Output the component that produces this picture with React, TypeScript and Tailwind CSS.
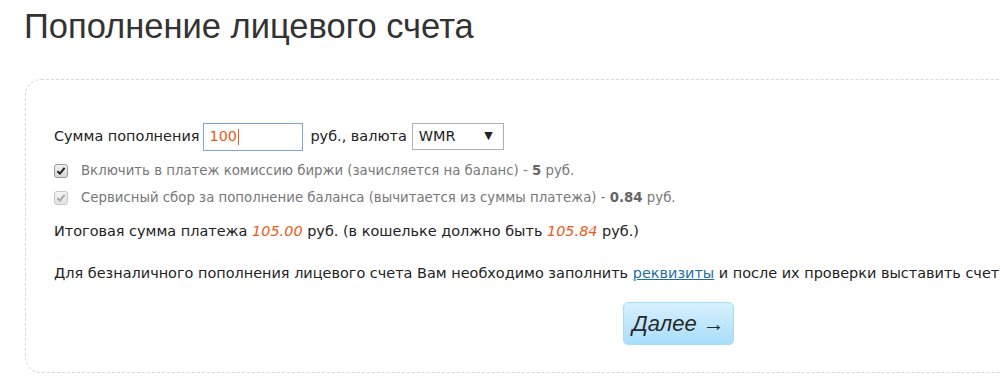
import React from 'react'

const bodyFont = { fontFamily: '"DejaVu Sans", Verdana, sans-serif' }
const titleFont = { fontFamily: '"Liberation Sans", Arial, sans-serif' }

function Check({ disabled }: { disabled?: boolean }) {
  return (
    <span
      className={
        'inline-flex h-[14px] w-[14px] shrink-0 items-center justify-center rounded-[3px] border bg-gradient-to-b ' +
        (disabled
          ? 'border-[#c8c8c8] from-[#f4f4f4] to-[#e2e2e2]'
          : 'border-[#9a9a9a] from-[#f2f2f2] to-[#d6d6d6]')
      }
    >
      <svg width="10" height="10" viewBox="0 0 10 10">
        <path
          d="M1.5 5.2 L3.9 7.6 L8.6 1.8"
          fill="none"
          stroke={disabled ? '#a8a8a8' : '#1e1e1e'}
          strokeWidth="2"
        />
      </svg>
    </span>
  )
}

export default function App() {
  return (
    <div className="h-[378px] w-[1000px] overflow-hidden bg-white text-[#222]" style={bodyFont}>
      <h1
        className="pl-[24px] pt-[4px] text-[34.5px] font-normal leading-[44px] text-[#333]"
        style={titleFont}
      >
        Пополнение лицевого счета
      </h1>
      <div className="ml-[25px] mt-[31px] h-[294px] w-[1200px] rounded-[16px] border border-dashed border-[#d8d8d8] pl-[28px] pt-[42px] text-[14.45px]">
        <div className="flex h-[29px] items-center">
          <span>Сумма пополнения</span>
          <div className="ml-[4px] flex h-[28px] w-[100px] items-center border border-[#7aa6d6] pl-[5px] text-[#f05a1a]">
            100<span className="ml-[1px] h-[16px] w-px bg-[#f05a1a]" />
          </div>
          <span className="ml-[7px]">руб., валюта</span>
          <div className="ml-[5px] flex h-[27px] w-[92px] items-center justify-between border border-[#b0b0b0] pl-[6px] pr-[10px]">
            <span>WMR</span>
            <span className="text-[11px]">▼</span>
          </div>
        </div>
        <div className="mt-[10px] flex h-[20px] items-center whitespace-nowrap text-[13.3px] text-[#777]">
          <Check />
          <span className="ml-[13px]">
            Включить в платеж комиссию биржи (зачисляется на баланс) - <b className="text-[#666]">5</b> руб.
          </span>
        </div>
        <div className="mt-[7px] flex h-[20px] items-center whitespace-nowrap text-[13.3px] text-[#777]">
          <Check disabled />
          <span className="ml-[13px]">
            Сервисный сбор за пополнение баланса (вычитается из суммы платежа) -{' '}
            <b className="text-[#666]">0.84</b> руб.
          </span>
        </div>
        <p className="mt-[13px] h-[20px] whitespace-nowrap leading-[20px]">
          Итоговая сумма платежа <i className="text-[#f05a1a]">105.00</i> руб. (в кошельке должно быть{' '}
          <i className="text-[#f05a1a]">105.84</i> руб.)
        </p>
        <p className="mt-[22px] h-[20px] whitespace-nowrap leading-[20px]">
          Для безналичного пополнения лицевого счета Вам необходимо заполнить{' '}
          <a className="text-[#1f6fa3] underline">реквизиты</a> и после их проверки выставить счет
        </p>
        <button
          className="ml-[569px] mt-[19px] h-[43px] w-[111px] rounded-[5px] border border-[#a6dcf5] bg-gradient-to-b from-[#d7f0fd] to-[#a8defa] text-[22px] italic text-[#2a2a2a]"
          style={titleFont}
        >
          Далее →
        </button>
      </div>
    </div>
  )
}
